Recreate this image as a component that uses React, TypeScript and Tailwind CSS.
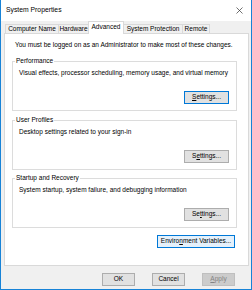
import React from 'react';

const font = { fontFamily: '"Liberation Sans", Arial, sans-serif' };

type BtnProps = {
  children: React.ReactNode;
  className?: string;
  variant?: 'normal' | 'default' | 'hover' | 'disabled';
};

const Btn: React.FC<BtnProps> = ({ children, className = '', variant = 'normal' }) => {
  const look = {
    normal: 'border-[#adadad] bg-[#e1e1e1] text-black',
    default: 'border-[#0078d7] bg-[#e1e1e1] text-black',
    hover: 'border-[#0078d7] bg-[#e5f1fb] text-black',
    disabled: 'border-[#bfbfbf] bg-[#cccccc] text-[#838383]',
  }[variant];
  return (
    <div className={`h-[13px] border flex items-center justify-center text-[6.5px] leading-none ${look} ${className}`}>
      {children}
    </div>
  );
};

const GroupBox: React.FC<{ label: string; text: string; mnemonic: React.ReactNode; className?: string }> = ({
  label,
  text,
  mnemonic,
  className = '',
}) => (
  <fieldset className={`ml-[7px] mr-[11px] border border-[#dcdcdc] ${className}`}>
    <legend className="ml-[2px] px-[1px] text-[6.5px] leading-[8px]">{label}</legend>
    <div className="h-[45px] flex flex-col pt-[4px] pb-[6px]">
      <div className="h-[8px] pl-[6px] leading-[8px] text-[6.5px] whitespace-nowrap">{text}</div>
      <Btn className="mt-auto self-end mr-[7px] w-[45px]" variant={label === 'Performance' ? 'default' : 'normal'}>
        {mnemonic}
      </Btn>
    </div>
  </fieldset>
);

const tabs = [
  { name: 'Computer Name', w: 'w-[54px]' },
  { name: 'Hardware', w: 'w-[31px]' },
  { name: 'Advanced', w: 'w-[36px]', active: true },
  { name: 'System Protection', w: 'w-[60px]' },
  { name: 'Remote', w: 'w-[28px]' },
];

export default function App() {
  return (
    <div
      className="w-[252px] h-[290px] flex flex-col bg-[#f0f0f0] border-x border-b border-[#1883d7] text-black overflow-hidden"
      style={font}
    >
      {/* Title bar */}
      <div className="h-[21px] bg-white flex items-center justify-between pl-[5px] pr-[7px]">
        <span className="text-[6.8px] leading-none">System Properties</span>
        <svg width="7" height="7" viewBox="0 0 7 7" className="mr-[1px]">
          <path d="M0.5 0.5 L6.5 6.5 M6.5 0.5 L0.5 6.5" stroke="#333" strokeWidth="0.7" fill="none" />
        </svg>
      </div>

      {/* Tabs */}
      <div className="h-[12px] flex items-end pl-[4px]">
        {tabs.map((t, i) =>
          t.active ? (
            <div
              key={t.name}
              className={`${t.w} -ml-px h-[13px] -mb-px relative z-10 bg-white border-x border-t border-[#d9d9d9] flex items-center justify-center text-[6.5px] leading-none pb-[2px]`}
            >
              {t.name}
            </div>
          ) : (
            <div
              key={t.name}
              className={`${t.w} ${i > 0 ? '-ml-px' : ''} h-[9px] bg-[#f0f0f0] border-x border-t border-[#d9d9d9] flex items-center justify-center text-[6.5px] leading-none whitespace-nowrap`}
            >
              {t.name}
            </div>
          )
        )}
      </div>

      {/* Tab panel */}
      <div className="ml-[3px] mr-[2px] h-[233px] bg-white border border-[#d9d9d9] flex flex-col">
        <div className="pt-[7px] pl-[10px] h-[15px] leading-[8px] text-[6.5px] whitespace-nowrap">
          You must be logged on as an Administrator to make most of these changes.
        </div>
        <GroupBox
          className="mt-[8px]"
          label="Performance"
          text="Visual effects, processor scheduling, memory usage, and virtual memory"
          mnemonic={<span><u>S</u>ettings...</span>}
        />
        <GroupBox
          className="mt-[5px]"
          label="User Profiles"
          text="Desktop settings related to your sign-in"
          mnemonic={<span>S<u>e</u>ttings...</span>}
        />
        <GroupBox
          className="mt-[4px]"
          label="Startup and Recovery"
          text="System startup, system failure, and debugging information"
          mnemonic={<span>Se<u>t</u>tings...</span>}
        />
        <Btn className="mt-[7px] self-end mr-[13px] w-[78px]" variant="hover">
          <span>Enviro<u>n</u>ment Variables...</span>
        </Btn>
      </div>

      {/* Footer buttons */}
      <div className="flex-1 flex justify-end items-start pt-[7px] pr-[16px] gap-[17px]">
        <Btn className="w-[33px]">OK</Btn>
        <Btn className="w-[33px]">Cancel</Btn>
        <Btn className="w-[33px]" variant="disabled">
          <span><u>A</u>pply</span>
        </Btn>
      </div>
    </div>
  );
}
